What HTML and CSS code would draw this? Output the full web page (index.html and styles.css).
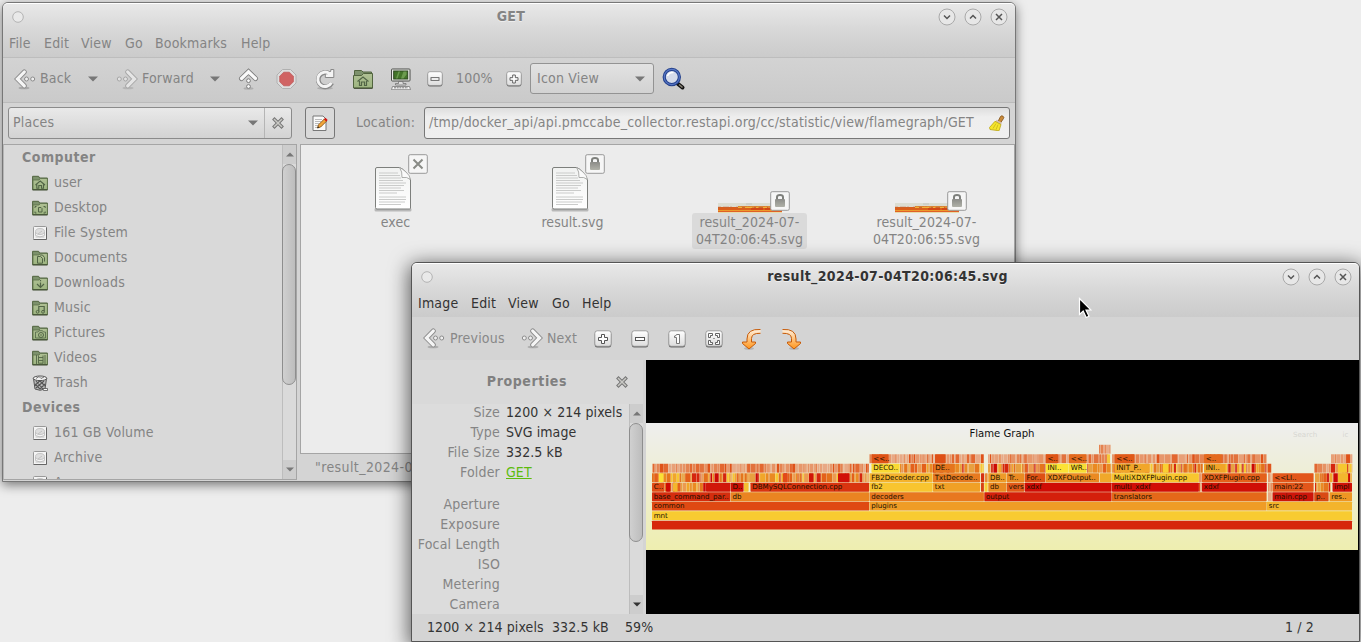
FILE: index.html
```html
<!DOCTYPE html>
<html lang="en">
<head>
<meta charset="utf-8">
<title>Desktop</title>
<link rel="stylesheet" href="styles.css">
</head>
<body>
<svg class="defs" width="0" height="0">
  <defs>
    <linearGradient id="gWhite" x1="0" y1="0" x2="0" y2="1"><stop offset="0" stop-color="#fff"/><stop offset="1" stop-color="#dcdcdc"/></linearGradient>
    <linearGradient id="gOrange" x1="0" y1="0" x2="0" y2="1"><stop offset="0" stop-color="#fff1df"/><stop offset="1" stop-color="#ff9418"/></linearGradient>
    <linearGradient id="gFolder" x1="0" y1="0" x2="0" y2="1"><stop offset="0" stop-color="#afc094"/><stop offset="1" stop-color="#9db580"/></linearGradient>
    <linearGradient id="gPaper" x1="0" y1="0" x2="0" y2="1"><stop offset="0" stop-color="#f1f2f1"/><stop offset="1" stop-color="#fff"/></linearGradient>
    <linearGradient id="gSky" x1="0" y1="0" x2="0" y2="1"><stop offset="0" stop-color="#eeeeee"/><stop offset="1" stop-color="#eeeeb0"/></linearGradient>
    <linearGradient id="gLock" x1="0" y1="0" x2="0" y2="1"><stop offset="0" stop-color="#8c8c88"/><stop offset="1" stop-color="#b0b1a8"/></linearGradient>
  </defs>
  <symbol id="prev" viewBox="0 0 22 22">
    <ellipse cx="10" cy="20" rx="5.500" ry="1.300" fill="#000" opacity=".18"/>
    <path d="M10.300 4L3.500 11L10.300 17.800" fill="none" stroke="#8c8c8c" stroke-width="5" stroke-linecap="round"/>
    <path d="M10.300 4L3.500 11L10.300 17.800" fill="none" stroke="#f5f5f5" stroke-width="3.200" stroke-linecap="round"/>
    <circle cx="12.500" cy="11" r="2" fill="#eee" stroke="#8c8c8c"/><circle cx="18.700" cy="11" r="2" fill="#eee" stroke="#8c8c8c"/>
  </symbol>
  <symbol id="next" viewBox="0 0 22 22"><g transform="matrix(-1 0 0 1 22 0)"><use href="#prev" width="22" height="22"/></g></symbol>
  <symbol id="up" viewBox="0 0 22 22">
    <ellipse cx="10.500" cy="20.500" rx="5" ry="1.200" fill="#000" opacity=".15"/>
    <path d="M3.500 10.500L10.500 3.800L17.500 10.500" fill="none" stroke="#7c7c7c" stroke-width="5" stroke-linecap="round"/>
    <path d="M3.500 10.500L10.500 3.800L17.500 10.500" fill="none" stroke="#fafafa" stroke-width="3.200" stroke-linecap="round"/>
    <circle cx="10.500" cy="12.700" r="1.900" fill="#fafafa" stroke="#7c7c7c"/><circle cx="10.500" cy="18.500" r="1.900" fill="#fafafa" stroke="#7c7c7c"/>
  </symbol>
  <symbol id="stop" viewBox="0 0 22 22">
    <path d="M6.500 1.500h8l5.500 5.500v8l-5.500 5.500h-8l-5.500-5.500v-8z" fill="#dedede" stroke="#b0b0b0"/>
    <path d="M7.700 4.200h5.700l4 4v5.600l-4 4h-5.700l-4-4v-5.600z" fill="#d06363" stroke="#bb5555" stroke-width=".7"/>
  </symbol>
  <symbol id="reload" viewBox="0 0 22 22">
    <ellipse cx="11" cy="20.300" rx="8" ry="1.500" fill="#000" opacity=".15"/>
    <path d="M17.800 15A7.200 7.200 0 1 1 15.500 5.700" fill="none" stroke="#888" stroke-width="4.800"/>
    <path d="M19.800 1.500v8h-8.500v-3.500l2.500-.3 3-2.500v-1.700z" fill="#f4f4f4" stroke="#888"/>
    <path d="M17.300 14.700A7.200 7.200 0 1 1 15.500 5.700" fill="none" stroke="#f4f4f4" stroke-width="3"/>
  </symbol>
  <symbol id="folder" viewBox="0 0 16 16">
    <path d="M.600 1.300h6l1 1.700h7.800v11.700h-14.800z" fill="#7d926c" stroke="#51643f" stroke-width="1"/>
    <path d="M1 5h6l1.300-1.500h7.100v11h-14.400z" fill="url(#gFolder)" stroke="#5a6e48" stroke-width=".8"/>
    <path d="M.600 14.900h14.800" stroke="#3c482f"/>
  </symbol>
  <symbol id="f-home" viewBox="0 0 16 16"><use href="#folder" width="16" height="16"/><path d="M3.500 10L8.200 6L13 10M4.800 9.500v3.700h2v-2.700h2.700v2.700h2v-3.700" fill="none" stroke="#526546" stroke-width="1.100"/></symbol>
  <symbol id="f-big" viewBox="0 0 22 22">
    <path d="M2.500 2.500h7l1.500 1.500h8.500v4h-17z" fill="#7d926c" stroke="#51643f"/>
    <path d="M1.500 7.500h8l2-2h9v14.500h-19z" fill="url(#gFolder)" stroke="#51643f"/><path d="M2 20.300h18.500" stroke="#3c482f"/>
    <path d="M5.500 13.500L11 9l5.500 4.500M7.500 13v4.500h2v-3.500h3v3.500h2v-4.500" fill="none" stroke="#526546" stroke-width="1.200"/>
  </symbol>
  <symbol id="f-desk" viewBox="0 0 16 16"><use href="#folder" width="16" height="16"/><path d="M3 8v-1.500h1.500M11.500 6.500h1.700V8M3 11.500V13h1.500M11.500 13h1.700v-1.500M6.500 7.500h2.500l1 1v3.500h-3.500z" fill="none" stroke="#526546"/></symbol>
  <symbol id="f-doc" viewBox="0 0 16 16"><use href="#folder" width="16" height="16"/><path d="M5.500 6.500h3l2 2v4.700h-5zM8 5h2.500l2 2.500v4" fill="none" stroke="#526546"/></symbol>
  <symbol id="f-down" viewBox="0 0 16 16"><use href="#folder" width="16" height="16"/><path d="M8.500 5v1.200M8.500 7.500v4.700M5 9l3.500 3.500L12 9" fill="none" stroke="#526546" stroke-width="1.200"/></symbol>
  <symbol id="f-music" viewBox="0 0 16 16"><use href="#folder" width="16" height="16"/><path d="M6.800 11.500V6.500h5.400v5" fill="none" stroke="#526546" stroke-width="1.200"/><circle cx="5.600" cy="11.800" r="1.400" fill="none" stroke="#526546"/><circle cx="11" cy="11.800" r="1.400" fill="none" stroke="#526546"/></symbol>
  <symbol id="f-pic" viewBox="0 0 16 16"><use href="#folder" width="16" height="16"/><path d="M3.500 7h2.500l1-1.300h3.500l1 1.300h2v6h-10z" fill="none" stroke="#526546" stroke-width=".8"/><circle cx="9" cy="10" r="2.500" fill="none" stroke="#526546"/><circle cx="9" cy="10" r=".8" fill="#526546"/></symbol>
  <symbol id="f-video" viewBox="0 0 16 16"><use href="#folder" width="16" height="16"/><path d="M4.500 5v9M13 5v9M6.500 5.500v8M11 5.500v8M6.500 7.500h4.500M6.500 10.500h4.500M6.500 13.200h4.500" fill="none" stroke="#526546" stroke-width=".9"/></symbol>
  <symbol id="disk" viewBox="0 0 16 16">
    <rect x="1.500" y="1.500" width="13" height="13" rx="1" fill="#f5f5f5" stroke="#999"/><path d="M1.500 14.500h13v-12" fill="none" stroke="#666"/>
    <ellipse cx="8" cy="6.500" rx="4.500" ry="3" fill="#dedede" stroke="#bbb" stroke-width=".8"/><path d="M3.500 7v3.500q4.500 3 9 0V7M3.500 12h9M6 9l4-3" fill="none" stroke="#bdbdbd" stroke-width=".9"/>
  </symbol>
  <symbol id="trash" viewBox="0 0 16 16">
    <path d="M1.500 3.500l1.500 10.500q5 2.500 10 0l1.500-10.500z" fill="#bdbdbd" stroke="#555"/>
    <path d="M4 6l7 8M7 5l6 6M3 9l5 5M12 6l-8 7M8 5.500l-5 5M13 9l-5 5" stroke="#555" stroke-width="1.100"/>
    <ellipse cx="8" cy="3.300" rx="6.800" ry="2.300" fill="#f2f2f2" stroke="#444" stroke-width=".9"/><path d="M4 3.500l3-2 2 2 3-1.500" fill="none" stroke="#777"/>
    <path d="M11 13.500h4.500v2h-4z" fill="#f5f5f5" stroke="#444" stroke-width=".7"/>
  </symbol>
  <symbol id="computer" viewBox="0 0 22 22">
    <rect x="1.500" y="1" width="18.500" height="12" rx=".8" fill="#eceeea" stroke="#4a4d48"/><rect x="3.700" y="3" width="14" height="8" fill="#437529" stroke="#2f4a22"/>
    <path d="M6 10.500l2.500-7h1.500l-2.500 7M11 10.500l2.500-7h3v3l-3 4" fill="#79a95c" opacity=".75"/>
    <path d="M8.500 13.500h4.500v2h3v1.500h-10.500V15.500h3z" fill="#ddd" stroke="#666" stroke-width=".7"/>
    <path d="M2.500 18.500h17l1 3.200h-19z" fill="#f4f4f4" stroke="#777" stroke-width=".8"/><path d="M4 19.800h14" stroke="#777" stroke-dasharray="2 .7"/>
  </symbol>
  <symbol id="key" viewBox="0 0 18 18">
    <rect x=".8" y="2" width="16.400" height="15.500" rx="2.500" fill="#6a6a6a"/><rect x=".8" y=".8" width="16.400" height="15.500" rx="2.500" fill="url(#gWhite)" stroke="#8b8b8b" stroke-width=".8"/>
  </symbol>
  <symbol id="k-minus" viewBox="0 0 18 18"><use href="#key" width="18" height="18"/><rect x="4.500" y="7.500" width="9" height="3" fill="#fff" stroke="#555"/></symbol>
  <symbol id="k-plus" viewBox="0 0 18 18"><use href="#key" width="18" height="18"/><path d="M7.500 4.500h3v3h3v3h-3v3h-3v-3h-3v-3h3z" fill="#fff" stroke="#555"/></symbol>
  <symbol id="k-one" viewBox="0 0 18 18"><use href="#key" width="18" height="18"/><path d="M8.500 4.500h3v9h-3v-6h-2v-1.500q2 0 2-1.500z" fill="#fff" stroke="#777"/></symbol>
  <symbol id="k-fit" viewBox="0 0 18 18"><use href="#key" width="18" height="18"/><path d="M3.500 3.500h4v2h-2v2h-2zM10.500 3.500h4v4h-2v-2h-2zM3.500 10.500h2v2h2v2h-4zM12.500 10.500h2v4h-4v-2h2z" fill="#fff" stroke="#555" stroke-width=".9"/><path d="M8 8.500h2" stroke="#999"/></symbol>
  <symbol id="lens" viewBox="0 0 24 24">
    <path d="M15.500 16.500l5 4" stroke="#111" stroke-width="4" stroke-linecap="round"/><path d="M17 17.500l3.500 3" stroke="#8b8578" stroke-width="1.500"/>
    <circle cx="9.800" cy="10" r="7.600" fill="#d5dbea" stroke="#23408c" stroke-width="3.200"/><circle cx="9.800" cy="10" r="7.600" fill="none" stroke="#5877c4" stroke-width="1.200"/><path d="M5.500 9q1.500-4 6-3.500" stroke="#fff" stroke-width="1.600" fill="none"/>
  </symbol>
  <symbol id="rot" viewBox="0 0 22 22">
    <ellipse cx="8" cy="20.500" rx="5" ry="1.300" fill="#000" opacity=".15"/>
    <path d="M19.500 1.500q-13.500-1-13.500 9.500v3h-4.500v1.500l6.500 5.500 6.500-5.500v-1.500h-4v-3.500q0-5.500 9-5.200z" fill="url(#gOrange)"/><path d="M19.500 1.500q-13.500-1-13.500 9.500v3h-4.500v1.500l6.500 5.500 6.500-5.500v-1.500h-4v-3.500q0-5.500 9-5.200" fill="none" stroke="#c65a08" stroke-linejoin="round"/>
  </symbol>
  <symbol id="edit" viewBox="0 0 16 16">
    <path d="M1 1h10l3 3v11.500h-13z" fill="#fafafa" stroke="#777"/><path d="M3 4.500h7M3 6.500h6M3 8.500h4M3 10.500h3M3 12.500h3" stroke="#bbb"/>
    <path d="M5.500 13l1-3.200 6-6 2.200 2.200-6 6z" fill="#f2a53a" stroke="#7c4a0c" stroke-width=".8"/><path d="M12 4.300l1.500-1.500 2.200 2.200-1.500 1.500z" fill="#d31414"/><path d="M5.300 13.200l.7-2 1.300 1.300z" fill="#222"/>
  </symbol>
  <symbol id="broom" viewBox="0 0 16 16">
    <path d="M9 6.500l2.500-5q1-1.200 2.500-.3t.5 2.300L11.500 8z" fill="#c98a3a" stroke="#805017" stroke-width=".8"/><path d="M7 5.800l5.300 3" stroke="#d2bdb0" stroke-width="2.500"/>
    <path d="M6 6.300l6 3.200-2 6.300-9-1.300-.5-2z" fill="#f5e52c" stroke="#baa511" stroke-width=".8"/><path d="M7 8.500l-3 5M9 9.700l-2 5" stroke="#c6b21a" stroke-width=".8"/>
  </symbol>
  <symbol id="cross" viewBox="0 0 12 12">
    <path d="M2.500 2.500L9.500 9.500M9.500 2.500L2.500 9.500" stroke="#747474" stroke-width="3.400" stroke-linecap="square"/><path d="M2.500 2.500L9.500 9.500M9.500 2.500L2.500 9.500" stroke="#c9c9c5" stroke-width="1.500" stroke-linecap="square"/>
  </symbol>
  <symbol id="tri" viewBox="0 0 10 6"><path d="M0 .5h10L5 5.500z"/></symbol>
  <symbol id="tri-up" viewBox="0 0 10 6"><path d="M0 5.500h10L5 .5z"/></symbol>
  <symbol id="w-min" viewBox="0 0 18 18"><circle cx="9" cy="9" r="8" fill="#e7e7e7" stroke="#a9a9a9"/><path d="M6 7.500l3 3 3-3" fill="none" stroke="#555" stroke-width="1.500"/></symbol>
  <symbol id="w-max" viewBox="0 0 18 18"><circle cx="9" cy="9" r="8" fill="#e7e7e7" stroke="#a9a9a9"/><path d="M6 10.500l3-3 3 3" fill="none" stroke="#555" stroke-width="1.500"/></symbol>
  <symbol id="w-close" viewBox="0 0 18 18"><circle cx="9" cy="9" r="8" fill="#e7e7e7" stroke="#a9a9a9"/><path d="M6 6l6 6M12 6l-6 6" fill="none" stroke="#555" stroke-width="1.500"/></symbol>
  <symbol id="w-menu" viewBox="0 0 12 12"><circle cx="6" cy="6" r="5.300" fill="#e9e9e9" stroke="#b3b3b3"/></symbol>
  <symbol id="paper" viewBox="0 0 40 48">
    <rect x="1.500" y="43" width="37" height="3.500" rx="1.500" fill="#000" opacity=".22"/>
    <path d="M4 2.500h22.500q3.500 1 6.500 5t4.500 7.500v28q0 1-1 1h-32.500q-1.500 0-1.500-1.500v-38.500q0-1.500 1.500-1.500z" fill="url(#gPaper)" stroke="#7d7f7c"/>
    <path d="M6 8h19M6 10.500h21M6 13h22M6 15.500h24M6 18h27M6 20.500h25M6 23h22M6 25.500h25M6 28h18M6 32h27M6 34.500h27M6 37h26M6 39.500h22" stroke="#cacbca"/>
    <path d="M26.500 2.500q3 4 2.500 10 5-1 8.500 2-.5-4-4.500-7.500t-6.500-4.500z" fill="#fafafa" stroke="#9a9c99" stroke-width=".8"/>
  </symbol>
  <symbol id="b-lock" viewBox="0 0 20 20"><rect x=".7" y=".7" width="18.600" height="18.600" rx="1.500" fill="#f6f6f6" stroke="#999"/><path d="M7 9V6q0-2 3-2t3 2v3" fill="none" stroke="#7e807c" stroke-width="2"/><rect x="5" y="8" width="10" height="8" rx="1" fill="url(#gLock)"/></symbol>
  <symbol id="b-x" viewBox="0 0 20 20"><rect x=".7" y=".7" width="18.600" height="18.600" rx="1.500" fill="#f6f6f6" stroke="#999"/><path d="M5.500 5.500l9 9M14.500 5.500l-9 9" stroke="#898b86" stroke-width="2"/></symbol>
  <symbol id="thumb" viewBox="0 0 64 10">
    <rect width="64" height="10" fill="#dcddd2"/><path d="M28 1h6" stroke="#c4c4c0"/><rect x="0" y="4" width="64" height="4" fill="#da5f1c"/><rect x="20" y="3" width="44" height="2" fill="#dc8a35"/>
    <path d="M0 4.300h64" stroke="#c9622f" stroke-dasharray="3 2 6 1 2 4"/><path d="M20 4.500h44" stroke="#f1b33b" stroke-dasharray="4 3 7 4 2 5"/><path d="M20 6h44" stroke="#cb3210" stroke-dasharray="0 13 12 2 10 3"/>
    <rect y="7" width="64" height="1.300" fill="#ec9a2a"/><rect y="8.100" width="64" height="1" fill="#e0551a"/><rect y="9.200" width="64" height=".8" fill="#e9dfa0"/>
  </symbol>
</svg>

<main class="desktop">
  <section class="window files">
    <header class="titlebar">
      <svg class="dot"><use href="#w-menu"/></svg><h1>GET</h1>
      <div class="controls"><svg><use href="#w-min"/></svg><svg><use href="#w-max"/></svg><svg><use href="#w-close"/></svg></div>
    </header>
    <nav class="menu"><span>File</span><span>Edit</span><span>View</span><span>Go</span><span>Bookmarks</span><span>Help</span></nav>
    <div class="toolbar">
      <svg class="i22"><use href="#prev"/></svg><span>Back</span><svg class="tri"><use href="#tri"/></svg>
      <svg class="i22 faded"><use href="#next"/></svg><span>Forward</span><svg class="tri"><use href="#tri"/></svg>
      <svg class="i22"><use href="#up"/></svg><svg class="i22"><use href="#stop"/></svg><svg class="i22"><use href="#reload"/></svg>
      <svg class="i22"><use href="#f-big"/></svg><svg class="i22"><use href="#computer"/></svg>
      <svg class="i16"><use href="#k-minus"/></svg><span>100%</span><svg class="i16"><use href="#k-plus"/></svg>
      <div class="select"><span>Icon View</span><svg class="tri"><use href="#tri"/></svg></div>
      <svg class="i24"><use href="#lens"/></svg>
    </div>
    <div class="location">
      <div class="places"><span>Places</span><svg class="tri"><use href="#tri"/></svg><b><svg class="i12"><use href="#cross"/></svg></b></div>
      <div class="editbtn"><svg class="i16"><use href="#edit"/></svg></div>
      <label>Location:</label>
      <div class="path"><span>/tmp/docker_api/api.pmccabe_collector.restapi.org/cc/statistic/view/flamegraph/GET</span><svg class="i16"><use href="#broom"/></svg></div>
    </div>
    <div class="panes">
      <aside class="sidebar">
        <ul>
          <li class="head">Computer</li>
          <li><svg><use href="#f-home"/></svg>user</li>
          <li><svg><use href="#f-desk"/></svg>Desktop</li>
          <li><svg><use href="#disk"/></svg>File System</li>
          <li><svg><use href="#f-doc"/></svg>Documents</li>
          <li><svg><use href="#f-down"/></svg>Downloads</li>
          <li><svg><use href="#f-music"/></svg>Music</li>
          <li><svg><use href="#f-pic"/></svg>Pictures</li>
          <li><svg><use href="#f-video"/></svg>Videos</li>
          <li><svg><use href="#trash"/></svg>Trash</li>
          <li class="head">Devices</li>
          <li><svg><use href="#disk"/></svg>161 GB Volume</li>
          <li><svg><use href="#disk"/></svg>Archive</li>
          <li><svg><use href="#disk"/></svg>Acer</li>
        </ul>
        <div class="scroll"><svg><use href="#tri-up"/></svg><i></i><svg><use href="#tri"/></svg></div>
      </aside>
      <div class="view">
        <div class="icons">
          <figure><div class="pic"><svg class="paper"><use href="#paper"/></svg><svg class="badge"><use href="#b-x"/></svg></div><figcaption>exec</figcaption></figure>
          <figure><div class="pic"><svg class="paper"><use href="#paper"/></svg><svg class="badge"><use href="#b-lock"/></svg></div><figcaption>result.svg</figcaption></figure>
          <figure><div class="pic"><svg class="thumb"><use href="#thumb"/></svg><svg class="badge low"><use href="#b-lock"/></svg></div><figcaption class="sel">result_2024-07-<br>04T20:06:45.svg</figcaption></figure>
          <figure><div class="pic"><svg class="thumb"><use href="#thumb"/></svg><svg class="badge low"><use href="#b-lock"/></svg></div><figcaption>result_2024-07-<br>04T20:06:55.svg</figcaption></figure>
        </div>
        <div class="status">"result_2024-0</div>
      </div>
    </div>
  </section>

  <section class="window viewer">
    <header class="titlebar">
      <svg class="dot"><use href="#w-menu"/></svg><h1>result_2024-07-04T20:06:45.svg</h1>
      <div class="controls"><svg><use href="#w-min"/></svg><svg><use href="#w-max"/></svg><svg><use href="#w-close"/></svg></div>
    </header>
    <nav class="menu"><span>Image</span><span>Edit</span><span>View</span><span>Go</span><span>Help</span></nav>
    <div class="toolbar">
      <svg class="i22"><use href="#prev"/></svg><span>Previous</span><svg class="i22"><use href="#next"/></svg><span>Next</span>
      <svg class="i18"><use href="#k-plus"/></svg><svg class="i18"><use href="#k-minus"/></svg><svg class="i18"><use href="#k-one"/></svg><svg class="i18"><use href="#k-fit"/></svg>
      <svg class="i22"><use href="#rot"/></svg><svg class="i22 flip"><use href="#rot"/></svg>
    </div>
    <div class="body">
      <aside class="props">
        <div class="props-head"><h2>Properties</h2><svg class="i12"><use href="#cross"/></svg></div>
        <div class="props-list">
          <dl>
            <dt>Size</dt><dd>1200 × 214 pixels</dd><dt>Type</dt><dd>SVG image</dd><dt>File Size</dt><dd>332.5 kB</dd><dt>Folder</dt><dd><u>GET</u></dd>
            <dt class="gap">Aperture</dt><dd></dd><dt>Exposure</dt><dd></dd><dt>Focal Length</dt><dd></dd><dt>ISO</dt><dd></dd><dt>Metering</dt><dd></dd><dt>Camera</dt><dd></dd>
          </dl>
          <div class="scroll"><svg><use href="#tri-up"/></svg><i></i><svg><use href="#tri"/></svg></div>
        </div>
      </aside>
      <div class="canvas"><svg id="flame" viewBox="646 423 712 127" width="712" height="127"></svg></div>
    </div>
    <footer class="statusbar"><span>1200 × 214 pixels</span><span>332.5 kB</span><span>59%</span><span>1 / 2</span></footer>
  </section>
  <svg class="cursor" viewBox="0 0 14 22"><path d="M1.500 1.500v16l3.700-3.400 3 6.400 2.800-1.300-3-6.200h5z" fill="#000" stroke="#fff" stroke-width="1.200"/></svg>
</main>
<script src="flame.js"></script>
</body>
</html>
```
FILE: styles.css
```css
* { box-sizing: border-box; }
body { margin: 0; background: #ededed; overflow: hidden; font: 14px/17px "DejaVu Sans Condensed", "DejaVu Sans", sans-serif; font-stretch: condensed; letter-spacing: .19px; color: #333; }
svg { display: block; }
.defs { position: absolute; }
h1, h2, ul, dl, dd, figure { margin: 0; padding: 0; }
.desktop { position: relative; width: 1361px; height: 642px; overflow: hidden; }
.window { position: absolute; display: flex; flex-direction: column; border: 1px solid #777; border-radius: 6px 6px 0 0; background: #d4d4d4; white-space: nowrap; }
.files { left: 2px; top: 2px; width: 1014px; height: 480px; color: #848484; box-shadow: 0 3px 11px rgba(0,0,0,.5); }
.viewer { left: 411px; top: 262px; width: 949px; height: 380px; border-color: #555; box-shadow: 0 4px 20px 2px rgba(0,0,0,.62); }

.titlebar { display: flex; align-items: center; height: 28px; padding: 0 7px 2px 9px; border-radius: 5px 5px 0 0; border-top: 1px solid #fff; background: linear-gradient(#e8e8e8, #d7d7d7); }
.titlebar h1 { flex: 1; text-align: center; font-size: 14px; line-height: 17px; letter-spacing: .38px; text-shadow: 0 1px #eee; }
.viewer .titlebar { padding-bottom: 1px; }
.dot { width: 12px; height: 12px; }
.controls { display: flex; gap: 8px; }
.controls svg { width: 18px; height: 18px; }
.files h1 { padding-left: 60px; }
.viewer h1 { padding-left: 60px; }

.menu { display: grid; align-items: center; height: 26px; background: linear-gradient(#d7d7d7, #cbcbcb); }
.files .menu { grid-template-columns: 35px 37px 44px 30px 86px auto; padding: 0 0 2px 6px; }
.viewer .menu { grid-template-columns: 53px 37px 44px 30px auto; padding-left: 6px; }

.toolbar { display: grid; align-items: center; justify-items: start; height: 44px; }
.files .toolbar { border-top: 1px solid #bdbdbd; height: 45px; padding: 0 0 3px 11px; grid-template-columns: 26px 48px 28px 26px 68px 28px 38px 38px 38px 38px 37px 29px 50px 24px 132px auto; background: linear-gradient(#d3d3d3, #cacaca); }
.viewer .toolbar { padding-left: 11px; grid-template-columns: 27px 71px 26px 47px 37px 37px 37px 36px 39px auto; }
.viewer .toolbar span { color: #888; }
.viewer .i18, .viewer .toolbar .i22:nth-child(n+9) { margin-top: 2px; }
.tri { width: 10px; height: 6px; fill: #777; }
.i12 { width: 12px; height: 12px; }
.i16 { width: 16px; height: 16px; }
.i18 { width: 18px; height: 18px; }
.i22 { width: 22px; height: 22px; }
.i24 { width: 24px; height: 24px; }
.faded { opacity: .6; }
.flip { transform: scaleX(-1); }
.select { display: flex; align-items: center; justify-content: space-between; width: 124px; height: 31px; padding: 0 8px 0 6px; border: 1px solid #939393; border-radius: 3px; background: linear-gradient(#e2e2e2, #d2d2d2); }

.location { display: flex; align-items: center; height: 42px; padding: 0 0 1px 5px; border-top: 1px solid #bbb; }
.places { display: flex; align-items: center; width: 284px; height: 32px; border: 1px solid #8b8b8b; border-radius: 3px; background: linear-gradient(#e9e9e9, #d3d3d3); padding-left: 4px; }
.places span { flex: 1; }
.places span, .path span, .location label { padding-bottom: 1px; }
.places b { display: grid; place-items: center; width: 27px; height: 30px; margin-left: 6px; border-left: 1px solid #b5b5b5; }
.editbtn { display: grid; place-items: center; width: 30px; height: 32px; margin-left: 13px; border: 1px solid #777; border-radius: 3px; background: #d9d9d9; }
.location label { width: 68px; margin-left: 21px; }
.path { display: flex; align-items: center; justify-content: space-between; width: 586px; height: 32px; padding: 0 4px; border: 1px solid #777; border-radius: 3px; background: linear-gradient(#dedede, #eee 30%, #efefef); }

.panes { display: flex; flex: 1; min-height: 0; gap: 3px; }
.sidebar { display: flex; flex: none; width: 294px; height: 336px; overflow: hidden; border: 1px solid #a5a5a5; border-left-color: #b5b5b5; background: #d9d9d9; }
.sidebar ul { flex: 1; list-style: none; }
.sidebar li { display: flex; align-items: center; height: 25px; padding-left: 28px; gap: 6px; }
.sidebar li svg { width: 16px; height: 16px; }
.sidebar .head { padding-left: 18px; font-weight: bold; letter-spacing: .5px; }
.scroll { display: flex; flex-direction: column; width: 14px; background: #dadada; border-left: 1px solid #bdbdbd; }
.scroll svg { width: 14px; height: 19px; padding: 7px 3px; fill: #777; background: #cdcdcd; }
.scroll i { width: 14px; margin-left: -1px; border: 1px solid #8e8e8e; border-radius: 7px; background: linear-gradient(90deg, #d0d0d0, #bdbdbd); }
.sidebar .scroll i { height: 221px; }
.scroll svg:last-child { margin-top: auto; }

.view { flex: 1; min-width: 0; display: flex; flex-direction: column; }
.icons { display: flex; height: 310px; padding: 8px 0 0 6px; border: 1px solid #a5a5a5; background: #ececec; letter-spacing: .05px; }
.icons figure { flex: none; width: 177px; text-align: center; }
.pic { position: relative; display: flex; justify-content: center; align-items: flex-end; height: 60px; }
.paper { width: 40px; height: 48px; margin-right: 5px; }
.thumb { width: 64px; height: 10px; }
.badge { position: absolute; left: 101px; top: 1px; width: 20px; height: 20px; }
.badge.low { left: 109px; top: 38px; }
.icons figcaption { display: inline-block; padding: 1px 4px; }
.icons .sel { background: #dadada; border-radius: 3px; }
.status { padding: 4px 0 0 15px; line-height: 19px; letter-spacing: .4px; }

.body { display: flex; height: 254px; }
.props { width: 231px; margin-right: 3px; background: #dcdcdc; }
.props-head { display: flex; align-items: center; height: 44px; background: #d9d9d9; }
.props h2 { width: 206px; padding: 0 0 2px 24px; text-align: center; font-size: 14px; letter-spacing: .6px; color: #808080; }
.props-head svg { margin-left: -2px; }
.props-list { display: flex; height: 210px; overflow: hidden; }
.props dl { display: grid; grid-template-columns: 88px 129px; column-gap: 6px; width: 217px; align-content: start; line-height: 20px; margin-top: -2px; }
.props dd { letter-spacing: .08px; }
.props dt { height: 20px; text-align: right; color: #858585; }
.props dt.gap, .props dt.gap + dd { margin-top: 12px; }
.props u { color: #5dbb0d; }
.props .scroll i { height: 119px; }
.props .scroll svg:last-child { fill: #333; }
.canvas { flex: 1; padding-top: 63px; background: #000; }
.statusbar { display: grid; grid-template-columns: 125px 73px 660px auto; align-items: center; height: 27px; padding-left: 15px; letter-spacing: .1px; }
.cursor { position: absolute; left: 1078px; top: 297px; width: 14px; height: 22px; }

#flame text { font: 7.1px "DejaVu Sans", sans-serif; font-stretch: normal; letter-spacing: 0; fill: #201000; }
#flame .title { font-size: 10.1px; fill: #111; }
#flame .ghost { fill: #000; opacity: .1; }
```
FILE: flame.js
```js
const NS = "http://www.w3.org/2000/svg";
const root = document.getElementById("flame");

function add(tag, attrs, text) {
  const el = document.createElementNS(NS, tag);
  for (const k in attrs) el.setAttribute(k, attrs[k]);
  if (text) el.textContent = text;
  root.appendChild(el);
}

let seed = 7;
function rnd() {
  seed = (seed * 16807) % 2147483647;
  return seed / 2147483647;
}

const rowY = level => 520.7 - level * 9.49;
const hot = ["#d5260e", "#e4601a", "#ea8a22", "#f1a62a", "#cc0904", "#f7c831", "#e5751c", "#ec9a50", "#ea8a22", "#e8a040", "#e4701c"];
const pale = ["#e3672f", "#e69264", "#e8a077", "#df5218", "#e58350", "#e7976b", "#e2723c", "#e8a985"];

function frame(level, x0, x1, color, label) {
  add("rect", { x: x0, y: rowY(level), width: x1 - x0 - 0.4, height: 8.9, fill: color, rx: 0.6 });
  if (label) add("text", { x: x0 + 1.7, y: rowY(level) + 6.5 }, label);
}

function stripes(level, x0, x1, colors) {
  let x = x0;
  while (x < x1) {
    const w = Math.min(x1 - x, 0.8 + rnd() * rnd() * 6);
    add("rect", { x, y: rowY(level), width: Math.max(w - 0.25, 0.3), height: 8.9, fill: colors[Math.floor(rnd() * colors.length)] });
    x += w;
  }
}

add("rect", { x: 646, y: 423, width: 712, height: 127, fill: "url(#gSky)" });
add("text", { x: 1002, y: 437.3, "text-anchor": "middle", class: "title" }, "Flame Graph");
add("text", { x: 1293, y: 437, class: "ghost" }, "Search");
add("text", { x: 1342.5, y: 437, class: "ghost" }, "ic");

[
  [7, 869, 984, pale], [7, 988, 1108, pale], [7, 1112, 1267, pale], [7, 1331, 1352, pale],
  [6, 652, 869, pale], [6, 900, 984, hot], [6, 988, 1046, hot], [6, 1087, 1111, hot],
  [6, 1112, 1203, hot], [6, 1225, 1266, hot], [6, 1266, 1272, pale], [6, 1314, 1331, pale], [6, 1331, 1352, hot],
  [5, 652, 869, hot], [5, 1268, 1272, pale], [5, 1315, 1330, hot], [5, 1330, 1352, hot],
  [4, 665, 706, hot], [4, 1268, 1272, pale], [4, 1315, 1331, hot], [3, 1268, 1272, pale],
  [4, 1199, 1202, pale], [5, 1199, 1202, pale], [8, 1099, 1111, ["#e8895c", "#e58350"]]
].forEach(s => stripes(...s));

[
  [0, 652, 1352.4, "#d6270c"],
  [1, 652, 1352.4, "#f8cb31", "mnt"],
  [2, 652, 869.5, "#df4912", "common"], [2, 869.5, 1267, "#ef9c26", "plugins"], [2, 1267, 1352.4, "#f3b42c", "src"],
  [3, 652, 730.7, "#d42d0e", "base_command_par.."], [3, 730.7, 869.5, "#ea8421", "db"], [3, 869.5, 984.3, "#e8781f", "decoders"],
  [3, 984.3, 1112, "#d4200b", "output"], [3, 1112, 1267, "#e46819", "translators"], [3, 1272.5, 1314, "#cc150a", "main.cpp"],
  [3, 1314.2, 1329, "#d94a14", "p.."], [3, 1329.5, 1352.4, "#ee9623", "res.."],
  [4, 652, 665, "#e04d16", "C.."], [4, 666, 671, "#cf0906"], [4, 673, 678, "#f3b62d"], [4, 706, 730.7, "#d0170a"], [4, 730.7, 744, "#cc1005", "D.."],
  [4, 744, 749, "#f5c02f"], [4, 750.5, 869.5, "#d9340f", "DBMySQLConnection.cpp"], [4, 869.5, 933, "#f8c52f", "fb2"],
  [4, 933, 980.5, "#f0a026", "txt"], [4, 981, 984.3, "#d84014"], [4, 984.5, 988, "#f8cd35"], [4, 988.3, 1006.8, "#ea8a22", "db"],
  [4, 1006.8, 1024.7, "#e25a18", "vers"], [4, 1024.7, 1112, "#cf0c05", "xdxf"], [4, 1112, 1199.3, "#d10e06", "multi_xdxf"],
  [4, 1202, 1267.2, "#cf0f06", "xdxf"], [4, 1272.5, 1314, "#e2561a", "main:22"], [4, 1332.5, 1352.4, "#d01208", "impl"],
  [5, 659, 664, "#fbe036"], [5, 783, 788, "#e24a18"], [5, 809, 814, "#d11508"], [5, 838, 850, "#d11008"], [5, 869.5, 933, "#f4b32c", "FB2Decoder.cpp"], [5, 933, 980.5, "#e67a20", "TxtDecode.."], [5, 981, 984.6, "#d63010"],
  [5, 985, 988, "#e88a38"], [5, 988.3, 1006.8, "#ee9a28", "DB.."], [5, 1006.8, 1024.7, "#ea8a22", "Tr.."], [5, 1024.7, 1045.7, "#de5014", "For.."],
  [5, 1045.7, 1099.5, "#ea8a22", "XDXFOutput.."], [5, 1099.8, 1112, "#f0a82a"], [5, 1112, 1199.3, "#f8c62f", "MultiXDXFPlugin.cpp"],
  [5, 1202, 1267.2, "#e4601a", "XDXFPlugin.cpp"], [5, 1272.5, 1314, "#e2561a", "<<LI.."], [5, 1338, 1348.5, "#f3b62e"],
  [6, 871.5, 900, "#f9d933", "DECO.."], [6, 933.5, 955, "#e5751d", "DE.."], [6, 1045.7, 1069, "#fce235", "INI.."],
  [6, 1069, 1087, "#f8dc34", "WR.."], [6, 1114.5, 1150, "#f1a62a", "INIT_P.."], [6, 1163, 1169, "#f9cf32"], [6, 1204, 1226, "#f0a428", "INI.."], [6, 1338, 1347.5, "#f6c731"],
  [7, 871.5, 889, "#de5215", "<<.."], [7, 935, 946, "#de5015"], [7, 1045.7, 1058, "#de5515", "<.."], [7, 1069, 1087, "#e36a1c", "<<.."],
  [7, 1107, 1110.5, "#f5c83a"], [7, 1114.5, 1135, "#e05a18", "<<.."], [7, 1204, 1222, "#e46a1e", "<.."]
].forEach(f => frame(...f));
```
